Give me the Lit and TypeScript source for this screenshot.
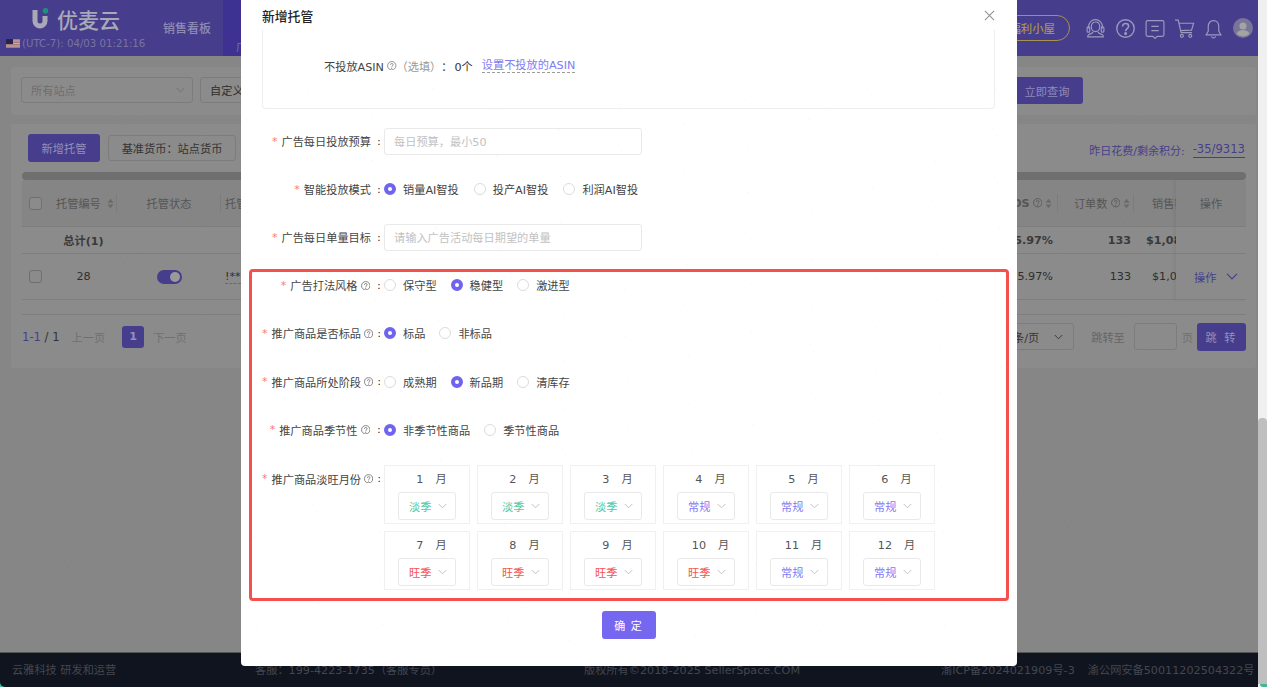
import { LitElement, html, css, svg } from "lit";
import { customElement } from "lit/decorators.js";

const chevron = html`<svg class="chev" viewBox="0 0 10 6" width="9" height="6"><path d="M.8.8 5 5 9.2.8" fill="none" stroke="currentColor" stroke-width="1"/></svg>`;
const help = html`<svg class="help" viewBox="0 0 12 12" width="9.500" height="9.500"><circle cx="6" cy="6" r="5.300" fill="none" stroke="currentColor" stroke-width="1"/><path d="M4.300 4.800C4.300 3.800 5 3.200 6 3.200s1.800.6 1.800 1.500C7.800 6 6 6 6 7.400" fill="none" stroke="currentColor" stroke-width="1"/><circle cx="6" cy="9" r=".7" fill="currentColor"/></svg>`;
const sorter = html`<svg class="sort" viewBox="0 0 8 12" width="7" height="11"><path d="M4 .5 7.400 5H.6Z M4 11.500.6 7h6.800Z" fill="currentColor"/></svg>`;

type Opt = [string, boolean];
interface Row { label: string; short: boolean; opts: Opt[]; }
const radioRows: Row[] = [
  { label: "广告打法风格", short: true, opts: [["保守型", false], ["稳健型", true], ["激进型", false]] },
  { label: "推广商品是否标品", short: false, opts: [["标品", true], ["非标品", false]] },
  { label: "推广商品所处阶段", short: false, opts: [["成熟期", false], ["新品期", true], ["清库存", false]] },
  { label: "推广商品季节性", short: true, opts: [["非季节性商品", true], ["季节性商品", false]] },
];
const months: [number, string, string][] = [
  [1, "淡季", "low"], [2, "淡季", "low"], [3, "淡季", "low"], [4, "常规", "norm"], [5, "常规", "norm"], [6, "常规", "norm"],
  [7, "旺季", "peak"], [8, "旺季", "peak"], [9, "旺季", "peak"], [10, "旺季", "peak"], [11, "常规", "norm"], [12, "常规", "norm"],
];

const marks: [number, number][] = [];
for (let j = -6; j < 30; j++) for (let i = -8; i < 24; i++) {
  const x = 318 + 125 * i - 62 * j;
  const y = 85 - 5 * i + 25.7 * j;
  if (x > 25 && x < 1230 && y > 75 && y < 635) marks.push([x - 17, y - 7]);
}

@customElement("app-root")
export class AppRoot extends LitElement {
  static styles = css`
    :host { display: block; width: 1267px; height: 687px; overflow: hidden; position: relative; background: #868686;
      font-family: "DejaVu Sans", "Noto Sans CJK SC", sans-serif; font-size: 11.2px; color: #333; }
    * { box-sizing: border-box; }
    .page { display: flex; height: 687px; }
    .main { width: 1258px; display: flex; flex-direction: column; height: 687px; background: #45b592; }
    .sidebar { width: 9px; background: #f0f0f0; display: flex; flex-direction: column; justify-content: flex-end; }
    .thumb { height: 266px; background: #bfbfbf; border-radius: 4px 4px 0 0; }
    .grn { height: 3px; background: #45b592; margin-left: 2px; border-radius: 0 0 0 3px; }

    header { height: 56px; background: #463e8c; display: flex; color: #8f8bb8; flex: none; }
    .brand { width: 163px; display: flex; flex-direction: column; }
    .logo { display: flex; align-items: center; height: 38px; padding-left: 30px; gap: 7px; color: #a9a8b6; font-size: 21px; font-weight: 500; }
    .time { display: flex; align-items: center; gap: 2px; padding-left: 6px; font-size: 10.2px; color: #78749f; }
    .nav1 { width: 60px; display: flex; align-items: center; font-size: 12px; font-weight: 500; color: #8f8bb5; padding-bottom: 1px; }
    .nav-active { width: 120px; background: #3d3192; padding: 38px 0 0 13px; font-size: 11px; color: #75719c; }
    .head-right { margin-left: auto; display: flex; align-items: center; }
    .pill { height: 26px; border: 1px solid #a8924f; border-radius: 13px; width: 90px; display: flex; align-items: center; justify-content: flex-end; padding-right: 14px; color: #a8924f; font-size: 11.400px; margin-right: 11px; font-weight: 500; }
    .hi { width: 29.500px; display: flex; justify-content: center; color: #9c9abd; }

    .content { flex: 1; padding: 11px 2px 0 11px; display: flex; flex-direction: column; gap: 9px; min-height: 0; background: #868686; }
    .card { background: #8b8b8b; border-radius: 3px; }
    .filter { height: 48px; padding: 10px; display: flex; gap: 7px; align-items: flex-start; flex: none; }
    .sel { height: 26px; border: 1px solid #7c7c7c; border-radius: 3px; display: flex; align-items: center; justify-content: space-between; padding: 0 7px 0 9px; color: #6e6e6e; }
    .sel.w1 { width: 172px; }
    .sel.w2 { width: 120px; color: #2e2e2e; }
    .query { margin-left: auto; margin-right: 163px; height: 27px; width: 72px; background: #463e8c; border-radius: 3px; color: #8f8bb8; display: flex; align-items: center; justify-content: center; }
    .tcard { height: 244px; padding: 10px 10px 0 11px; display: flex; flex-direction: column; flex: none; }
    .tools { display: flex; align-items: center; gap: 8px; height: 28px; padding-left: 6px; }
    .add { width: 72px; height: 28px; background: #463e8c; border-radius: 3px; color: #9490bc; display: flex; align-items: center; justify-content: center; }
    .cur { width: 128px; height: 26px; border: 1px solid #7c7c7c; border-radius: 3px; display: flex; align-items: center; justify-content: center; color: #333; }
    .spend { margin-left: auto; color: #463e8c; display: flex; gap: 8px; align-items: center; margin-top: 4px; font-size: 11px; margin-right: 1px; }
    .spend u { text-decoration: none; border-bottom: 1px solid #463e8c; padding-bottom: 1px; font-size: 11.600px; }
    .hbar { height: 8px; background: #6f6f6f; border-radius: 4px; margin-top: 10px; flex: none; }
    .table { position: relative; height: 120px; flex: none; }
    .tr { display: flex; border-bottom: 1px solid #7e7e7e; align-items: center; }
    .tr.h { height: 47px; background: #858585; color: #555; }
    .tr.t { height: 27px; font-weight: 700; color: #3a3a3a; }
    .tr.r { height: 46px; color: #2e2e2e; }
    .c0 { width: 26px; padding-left: 7px; flex: none; }
    .c1 { width: 69px; flex: none; display: flex; align-items: center; justify-content: center; gap: 6px; height: 100%; }
    .c1.hd { justify-content: flex-start; padding-left: 8px; }
    .c1v { padding-left: 2px; }
    .c2 { width: 104px; flex: none; text-align: center; display: flex; justify-content: center; align-items: center; height: 100%; padding-left: 1px; }
    .c3 { flex: 1; padding-left: 4px; white-space: nowrap; }
    .c3 span { border-bottom: 1px dashed #6a6a6a; }
    .c4 { width: 110px; flex: none; display: flex; gap: 3px; align-items: center; justify-content: flex-end; padding-right: 5px; }
    .c5 { width: 76px; flex: none; display: flex; gap: 3px; align-items: center; justify-content: flex-end; padding-right: 3px; }
    .c6 { width: 42px; flex: none; white-space: nowrap; overflow: hidden; padding-left: 18px; }
    .c6.b { padding-left: 12px; }
    .c7 { width: 70px; flex: none; }
    .div { border-right: 1px solid #7c7c7c; height: 18px; }
    .sort { color: #6a6a6a; }
    .check { width: 13px; height: 13px; border: 1px solid #6f6f6f; border-radius: 3px; display: block; background: #8b8b8b; }
    .sw { width: 25px; height: 14px; border-radius: 7px; background: #463e8c; display: flex; justify-content: flex-end; padding: 2px; }
    .sw i { width: 10px; height: 10px; border-radius: 50%; background: #9a9a9a; display: block; }
    .fixed { position: absolute; right: 0; top: 0; bottom: 0; width: 70px; background: #8b8b8b; box-shadow: -2px 0 3px rgba(0,0,0,.05); display: flex; flex-direction: column; }
    .fixed .f1 { height: 47px; background: #858585; display: flex; align-items: center; justify-content: center; color: #555; border-bottom: 1px solid #7e7e7e; }
    .fixed .f2 { height: 27px; border-bottom: 1px solid #7e7e7e; }
    .fixed .f3 { height: 46px; display: flex; align-items: center; padding-left: 18px; gap: 10px; color: #463e8c; border-bottom: 1px solid #7e7e7e; }
    .fixed .chev { width: 12px; height: 7px; }
    .pager { display: flex; align-items: center; height: 44px; margin-top: 14px; border-top: 1px solid #7e7e7e; flex: none; }
    .range { font-size: 11.600px; }
    .range b { font-weight: 400; color: #463e8c; }
    .pager .muted { color: #6f6f6f; }
    .prev { margin-left: 12px; }
    .pn { width: 22px; height: 22px; background: #463e8c; color: #9490bc; border-radius: 3px; display: flex; align-items: center; justify-content: center; font-weight: 700; margin: 0 9px 0 17px; }
    .pg-right { margin-left: auto; display: flex; align-items: center; }
    .size { width: 70px; height: 27px; border: 1px solid #7c7c7c; border-radius: 3px; display: flex; align-items: center; justify-content: flex-end; gap: 15px; padding-right: 10px; color: #333; white-space: nowrap; }
    .jump { margin-left: 17px; color: #666; }
    .jin { width: 43px; height: 27px; border: 1px solid #7c7c7c; border-radius: 3px; margin: 0 5px 0 9px; }
    .go { width: 49px; height: 28px; background: #463e8c; border-radius: 3px; color: #9490bc; display: flex; align-items: center; justify-content: center; margin-left: 4px; letter-spacing: 2px; }

    footer { height: 35px; flex: none; background: #10141e; display: flex; align-items: center; color: #44474f; font-size: 11.200px; padding: 0 0 2px 12px; border-top: 1px solid #555; border-radius: 0 0 0 5px; white-space: nowrap; }
    footer div { flex: none; }
    .f-a { width: 243px; }
    .f-b { width: 329px; }
    .f-c { width: 357px; }
    .f-d { margin-right: 13px; }

    .modal { position: absolute; left: 241px; top: 0; width: 776px; height: 666px; background: #fff; border-radius: 0 0 4px 4px; display: flex; flex-direction: column; overflow: hidden; }
    .mhead { height: 30px; flex: none; display: flex; align-items: center; justify-content: space-between; padding: 2px 22px 1px 21px; font-size: 12.800px; font-weight: 500; color: #222; }
    .close { color: #8f8f8f; display: block; }
    .mbody { flex: 1; padding: 0 22px 0 21px; display: flex; flex-direction: column; }
    .asin { height: 79px; border: 1px solid #eeeeee; border-top: none; border-radius: 0 0 4px 4px; display: flex; align-items: center; padding: 0 0 7px 61px; color: #444; flex: none; }
    .asin .help { margin: 0 0 0 3px; color: #777; }
    .asin .opt { color: #999; }
    .asin .num { margin: 0 9px 0 2px; color: #333; }
    .asin a { color: #8379f4; border-bottom: 1px dashed #9b9b9b; line-height: 13px; }
    .row { display: flex; align-items: center; height: 48.100px; flex: none; }
    .row.first { margin-top: 8px; }
    .lab { width: 122px; flex: none; display: flex; justify-content: flex-end; align-items: center; color: #444; white-space: nowrap; padding-right: 2px; }
    .lab em { font-style: normal; color: #f77; margin-right: 4px; font-size: 11px; }
    .lab .help { margin-left: 3px; color: #666; }
    .lab .colon { width: 5px; margin-left: 4px; text-align: left; color: #333; }
    .lab.plain .colon { margin-left: 6px; }
    .lab.short .colon { margin-left: 7px; }
    .ctrl { flex: 1; display: flex; align-items: center; }
    .ctrl.wide .radio { margin-right: 15px; }
    .input { width: 258px; height: 27px; border: 1px solid #e9e9e9; border-radius: 3px; padding-left: 9px; color: #c2c2c2; display: flex; align-items: center; }
    .radio { display: flex; align-items: center; gap: 7px; margin-right: 14px; color: #444; white-space: nowrap; }
    .dot { width: 12px; height: 12px; border-radius: 50%; border: 1px solid #dcdcdc; background: #fff; flex: none; }
    .dot.on { border: 4px solid #6f63f0; }
    .row.top { align-items: flex-start; height: auto; margin-top: 11px; }
    .row.top .lab { height: 26px; margin-top: 1px; }
    .months { display: grid; grid-template-columns: repeat(6, 86px); gap: 7px; }
    .mc { height: 59px; border: 1px solid #f0f0f0; display: flex; flex-direction: column; align-items: center; padding-top: 7px; }
    .mt { height: 14px; display: flex; gap: 12px; color: #555; line-height: 14px; padding-left: 9px; }
    .ms { width: 58px; height: 28px; margin-top: 5px; border: 1px solid #e9e9e9; border-radius: 3px; display: flex; align-items: center; justify-content: space-between; padding: 0 8px 0 10px; }
    .ms .chev { color: #bbb; }
    .low { color: #4fc9a4; }
    .norm { color: #8379f4; }
    .peak { color: #f55353; }
    .confirm { width: 54px; height: 28px; background: #7567f0; border-radius: 3px; color: #fff; border: none; font: inherit; font-size: 11px; letter-spacing: 1px; margin: 21px auto 0; display: flex; align-items: center; justify-content: center; flex: none; }
    .red { position: absolute; left: 249px; top: 269px; width: 760px; height: 332px; border: 3px solid #f5504e; border-radius: 4px; pointer-events: none; }
    .wm { position: absolute; inset: 0; pointer-events: none; }
    .wm span { position: absolute; transform: rotate(-24deg); color: rgba(0,0,0,.028); font-size: 11.500px; white-space: nowrap; }
  `;

  private icon(i: number) {
    const paths = [
      svg`<path d="M3.500 10V8a6.500 6.500 0 0 1 13 0v2" /><rect x="2" y="8.500" width="2.500" height="5" rx="1"/><rect x="15.500" y="8.500" width="2.500" height="5" rx="1"/><path d="M10 3.800c2.500 0 4 2 4 4.500S12.500 13 10 13 6 10.800 6 8.300 7.500 3.800 10 3.800Z"/><path d="M7.500 13c0 1.300-1 1.800-3 2.400-1.500.500-2 1.300-2 2.600h15c0-1.300-.5-2.100-2-2.600-2-.6-3-1.100-3-2.400"/>`,
      svg`<circle cx="10" cy="10" r="8.300" stroke-width="1.300"/><path d="M7.200 8c0-1.600 1.200-2.700 2.900-2.700S13 6.300 13 7.800c0 2.300-2.900 2.300-2.900 4.700" stroke-width="1.500"/><circle cx="10.100" cy="14.800" r=".9" fill="currentColor"/>`,
      svg`<path d="M3.500 2.500h14a1.500 1.500 0 0 1 1.500 1.500v12a1.500 1.500 0 0 1-1.500 1.500h-5L10.500 19.500 8.500 17.500h-5A1.500 1.500 0 0 1 2 16V4a1.500 1.500 0 0 1 1.500-1.500Z"/><path d="M7 8h7M7 12h7"/>`,
      svg`<path d="M1 2h3l2.800 12h10.400"/><path d="M4.700 5h14l-2 6.500L6 12"/><circle cx="7.500" cy="17" r="1.400"/><circle cx="15.500" cy="17" r="1.400"/>`,
      svg`<path d="M10 2.500c-3 0-5 2.300-5 5.500v4.500L3 16h14l-2-3.500V8c0-3.200-2-5.500-5-5.500Z"/><path d="M8 17.500c.4 1 1.100 1.500 2 1.500s1.600-.5 2-1.500"/>`,
    ];
    return html`<svg viewBox="0 0 20 20" width="21" height="21" fill="none" stroke="currentColor" stroke-width="1.100">${paths[i]}</svg>`;
  }

  render() {
    return html`
      <div class="page">
        <div class="main">
          <header>
            <div class="brand">
              <div class="logo">
                <svg viewBox="0 0 20 22" width="20" height="22">
                  <path d="M2.500 2v11a7.500 7.500 0 0 0 15 0V8h-5v5a2.500 2.500 0 0 1-5 0V2Z" fill="#a9a8b6" />
                  <circle cx="15.500" cy="2.800" r="2.800" fill="#1f8f7b" />
                </svg>
                <span>优麦云</span>
              </div>
              <div class="time">
                <svg viewBox="0 0 14 9" width="14" height="9"><rect width="14" height="9" fill="#a77"/><path d="M0 2h14M0 4.500h14M0 7h14" stroke="#b6b6b6" stroke-width="1"/><rect width="7" height="5" fill="#23264f"/></svg>
                <span>(UTC-7): 04/03 01:21:16</span>
              </div>
            </div>
            <div class="nav1">销售看板</div>
            <div class="nav-active">广告托管</div>
            <div class="head-right">
              <div class="pill">福利小屋</div>
              ${[0, 1, 2, 3, 4].map((i) => html`<div class="hi">${this.icon(i)}</div>`)}
              <div class="hi">
                <svg viewBox="0 0 20 20" width="20" height="20"><circle cx="10" cy="10" r="10" fill="#777598"/><circle cx="10" cy="8" r="3.600" fill="#a3a3a3"/><path d="M3.500 16c1-3 3.500-4 6.500-4s5.500 1 6.500 4a10 10 0 0 1-13 0Z" fill="#a3a3a3"/></svg>
              </div>
            </div>
          </header>
          <div class="content">
            <div class="card filter">
              <div class="sel w1"><span>所有站点</span>${chevron}</div>
              <div class="sel w2"><span>自定义</span>${chevron}</div>
              <div class="query">立即查询</div>
            </div>
            <div class="card tcard">
              <div class="tools">
                <div class="add">新增托管</div>
                <div class="cur">基准货币：站点货币</div>
                <div class="spend"><span>昨日花费/剩余积分:</span><u>-35/9313</u></div>
              </div>
              <div class="hbar"></div>
              <div class="table">
                <div class="tr h">
                  <div class="c0"><i class="check"></i></div>
                  <div class="c1 hd div"><span>托管编号</span>${sorter}</div>
                  <div class="c2 div"><span>托管状态</span></div>
                  <div class="c3">托管广告</div>
                  <div class="c4 div"><b>ACOS</b>${help}${sorter}</div>
                  <div class="c5 div"><span>订单数</span>${help}${sorter}</div>
                  <div class="c6">销售额</div>
                  <div class="c7"></div>
                </div>
                <div class="tr t">
                  <div class="c0"></div>
                  <div class="c1 c1v"><span>总计(1)</span></div>
                  <div class="c2"></div>
                  <div class="c3"></div>
                  <div class="c4">15.97%</div>
                  <div class="c5">133</div>
                  <div class="c6 b">$1,080</div>
                  <div class="c7"></div>
                </div>
                <div class="tr r">
                  <div class="c0"><i class="check"></i></div>
                  <div class="c1 c1v"><span>28</span></div>
                  <div class="c2"><div class="sw"><i></i></div></div>
                  <div class="c3"><span>!**</span></div>
                  <div class="c4">15.97%</div>
                  <div class="c5">133</div>
                  <div class="c6">$1,080</div>
                  <div class="c7"></div>
                </div>
                <div class="fixed">
                  <div class="f1">操作</div>
                  <div class="f2"></div>
                  <div class="f3"><span>操作</span>${chevron}</div>
                </div>
              </div>
              <div class="pager">
                <span class="range"><b>1-1</b> / 1</span>
                <span class="muted prev">上一页</span>
                <div class="pn">1</div>
                <span class="muted">下一页</span>
                <div class="pg-right">
                  <div class="size"><span>条/页</span>${chevron}</div>
                  <span class="jump">跳转至</span>
                  <div class="jin"></div>
                  <span class="muted">页</span>
                  <div class="go">跳 转</div>
                </div>
              </div>
            </div>
          </div>
          <footer>
            <div class="f-a">云雅科技 研发和运营</div>
            <div class="f-b">客服：199-4223-1735（客服专员）</div>
            <div class="f-c">版权所有©2018-2025 SellerSpace.COM</div>
            <div class="f-d">渝ICP备2024021909号-3</div>
            <div>渝公网安备50011202504322号</div>
          </footer>
        </div>
        <div class="sidebar"><div class="thumb"></div><div class="grn"></div></div>
      </div>

      <div class="modal">
        <div class="mhead">
          <span>新增托管</span>
          <svg class="close" viewBox="0 0 12 12" width="11" height="11"><path d="M1 1 11 11M11 1 1 11" stroke="currentColor" stroke-width="1.100"/></svg>
        </div>
        <div class="mbody">
          <div class="asin">
            <span>不投放ASIN</span>${help}<span class="opt">（选填）</span><span>：</span><span class="num">0个</span><a>设置不投放的ASIN</a>
          </div>
          <div class="row first">
            <div class="lab plain"><em>*</em>广告每日投放预算<span class="colon">:</span></div>
            <div class="ctrl"><div class="input">每日预算，最小50</div></div>
          </div>
          <div class="row">
            <div class="lab plain"><em>*</em>智能投放模式<span class="colon">:</span></div>
            <div class="ctrl wide">
              <label class="radio"><span class="dot on"></span>销量AI智投</label>
              <label class="radio"><span class="dot"></span>投产AI智投</label>
              <label class="radio"><span class="dot"></span>利润AI智投</label>
            </div>
          </div>
          <div class="row">
            <div class="lab plain"><em>*</em>广告每日单量目标<span class="colon">:</span></div>
            <div class="ctrl"><div class="input">请输入广告活动每日期望的单量</div></div>
          </div>
          ${radioRows.map((r) => html`
            <div class="row">
              <div class="lab ${r.short ? "short" : ""}"><em>*</em>${r.label}${help}<span class="colon">:</span></div>
              <div class="ctrl">
                ${r.opts.map(([t, on]) => html`<label class="radio"><span class="dot ${on ? "on" : ""}"></span>${t}</label>`)}
              </div>
            </div>`)}
          <div class="row top">
            <div class="lab"><em>*</em>推广商品淡旺月份${help}<span class="colon">:</span></div>
            <div class="months">
              ${months.map(([m, t, c]) => html`
                <div class="mc">
                  <div class="mt"><span>${m}</span><span>月</span></div>
                  <div class="ms"><span class=${c}>${t}</span>${chevron}</div>
                </div>`)}
            </div>
          </div>
          <button class="confirm">确 定</button>
        </div>
      </div>
      <div class="wm">
        ${marks.map(([x, y]) => html`<span style="left:${x}px;top:${y}px">17185</span>`)}
      </div>
      <div class="red"></div>
    `;
  }
}
